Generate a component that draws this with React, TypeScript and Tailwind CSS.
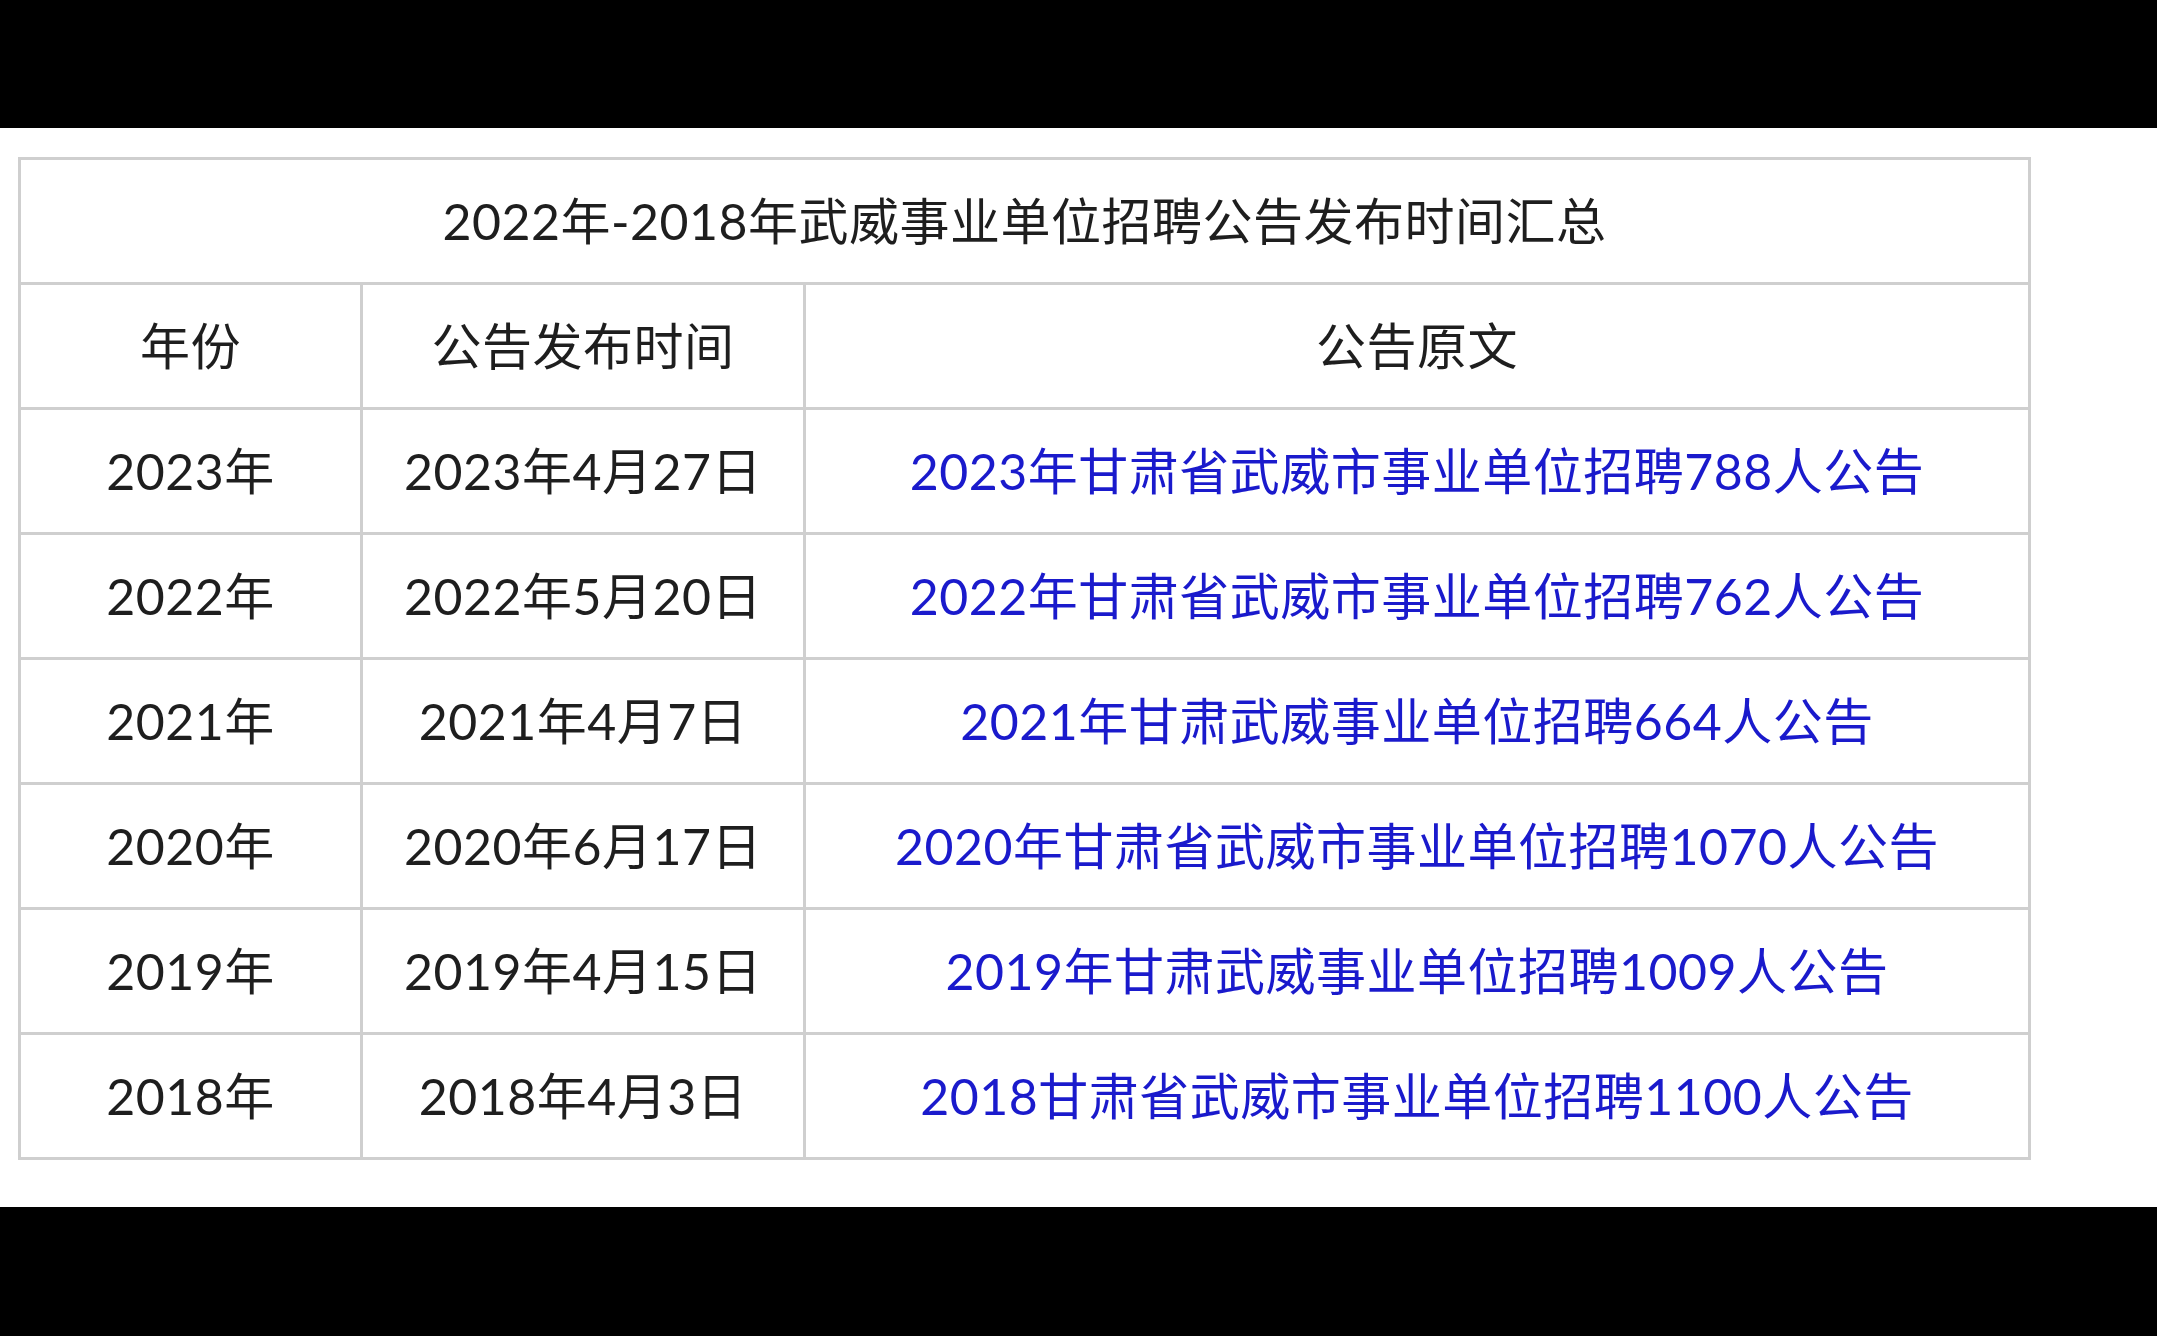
const rows = [
  { year: "2023年", date: "2023年4月27日", title: "2023年甘肃省武威市事业单位招聘788人公告" },
  { year: "2022年", date: "2022年5月20日", title: "2022年甘肃省武威市事业单位招聘762人公告" },
  { year: "2021年", date: "2021年4月7日", title: "2021年甘肃武威事业单位招聘664人公告" },
  { year: "2020年", date: "2020年6月17日", title: "2020年甘肃省武威市事业单位招聘1070人公告" },
  { year: "2019年", date: "2019年4月15日", title: "2019年甘肃武威事业单位招聘1009人公告" },
  { year: "2018年", date: "2018年4月3日", title: "2018甘肃省武威市事业单位招聘1100人公告" },
];

export default function App() {
  return (
    <div className="flex h-[1336px] w-[2157px] flex-col bg-black font-['Lato','Noto_Sans_CJK_SC',sans-serif]">
      <div className="h-[128px] shrink-0 bg-black" />
      <div className="flex-1 bg-white pl-[18px] pt-[29px]">
        <table className="w-[2013px] table-fixed border-collapse text-center text-[50px] leading-none tracking-[0.5px] text-[#1e1e1e]">
          <colgroup>
            <col className="w-[342px]" />
            <col className="w-[443px]" />
            <col />
          </colgroup>
          <tbody>
            <tr className="h-[125px]">
              <td colSpan={3} className="border-[3px] border-[#cfcfcf]">
                2022年-2018年武威事业单位招聘公告发布时间汇总
              </td>
            </tr>
            <tr className="h-[125px]">
              <td className="border-[3px] border-[#cfcfcf]">年份</td>
              <td className="border-[3px] border-[#cfcfcf]">公告发布时间</td>
              <td className="border-[3px] border-[#cfcfcf]">公告原文</td>
            </tr>
            {rows.map((r) => (
              <tr key={r.year} className="h-[125px]">
                <td className="border-[3px] border-[#cfcfcf]">{r.year}</td>
                <td className="border-[3px] border-[#cfcfcf]">{r.date}</td>
                <td className="border-[3px] border-[#cfcfcf]">
                  <a href="#" className="text-[#1a1acc]">{r.title}</a>
                </td>
              </tr>
            ))}
          </tbody>
        </table>
      </div>
      <div className="h-[129px] shrink-0 bg-black" />
    </div>
  );
}
